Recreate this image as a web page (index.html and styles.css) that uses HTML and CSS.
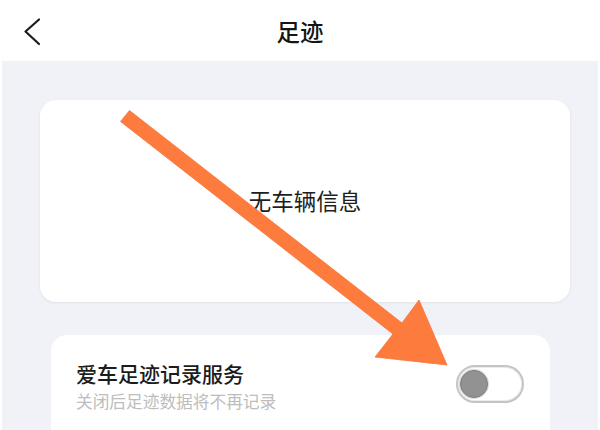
FILE: index.html
```html
<!DOCTYPE html>
<html lang="zh-CN">
<head>
<meta charset="utf-8">
<title>足迹</title>
<link rel="stylesheet" href="styles.css">
</head>
<body>
<div class="page">
  <header class="topbar">
    <div class="back">
      <svg width="16" height="28" viewBox="0 0 16 28" aria-hidden="true">
        <polyline points="15,1.5 1.5,13.5 15,26" fill="none" stroke="#1c1c1c" stroke-width="2.2" stroke-linecap="round" stroke-linejoin="round"/>
      </svg>
    </div>
    <h1 class="title">足迹</h1>
    <div></div>
  </header>
  <main class="content">
    <section class="vehicle-card">无车辆信息</section>
    <section class="service-card">
      <div class="service-text">
        <div class="service-name">爱车足迹记录服务</div>
        <div class="service-desc">关闭后足迹数据将不再记录</div>
      </div>
      <div class="switch"><span class="knob"></span></div>
    </section>
  </main>
  <svg class="arrow" width="600" height="430" viewBox="0 0 600 430" aria-hidden="true">
    <polygon points="129.5,110.5 402,323 419,300 447,365 375,357 393,334 120.5,121.5" fill="#fe7b3e" stroke="#f8743a" stroke-width="0.8" stroke-linejoin="miter"/>
  </svg>
</div>
</body>
</html>
```
FILE: styles.css
```css
* { box-sizing: border-box; }
html, body {
  margin: 0;
  padding: 0;
  height: 430px;
  overflow: hidden;
  background: #ffffff;
  font-family: "Noto Sans CJK SC", "Noto Sans", sans-serif;
}
.page {
  position: relative;
  width: 600px;
  height: 430px;
  overflow: hidden;
  display: flex;
  flex-direction: column;
}
.topbar {
  height: 61px;
  flex: none;
  display: grid;
  grid-template-columns: 1fr auto 1fr;
  align-items: center;
  background: #ffffff;
}
.back {
  padding-left: 24px;
  display: flex;
  align-items: center;
  padding-top: 2px;
}
.back svg { display: block; }
.title {
  margin: 0;
  font-size: 23.5px;
  font-weight: 500;
  color: #151515;
  line-height: 32px;
}
.content {
  flex: 1;
  margin: 0 2px;
  background: #f1f2f7;
  padding-top: 39px;
  display: flex;
  flex-direction: column;
  gap: 33px;
}
.vehicle-card {
  margin-left: 38px;
  width: 530px;
  height: 202px;
  flex: none;
  background: #ffffff;
  border-radius: 16px;
  box-shadow: 0 1px 3px rgba(0, 0, 0, 0.07);
  display: flex;
  align-items: center;
  justify-content: center;
  font-size: 22.5px;
  color: #1e1e1e;
  padding-bottom: 2px;
}
.service-card {
  margin-left: 49px;
  width: 499px;
  height: 130px;
  flex: none;
  background: #ffffff;
  border-radius: 16px;
  padding: 24px 26px 0 25px;
  display: flex;
  align-items: flex-start;
  justify-content: space-between;
}
.service-text {
  display: flex;
  flex-direction: column;
  gap: 3px;
}
.service-name {
  font-size: 21px;
  line-height: 28px;
  font-weight: 500;
  color: #1c1c1c;
}
.service-desc {
  font-size: 16.7px;
  line-height: 22px;
  color: #bdbdbd;
}
.switch {
  margin-top: 6px;
  width: 68px;
  height: 38px;
  border: 2px solid #c4c4c4;
  border-radius: 19px;
  background: #ffffff;
  box-shadow: inset 0 0 0 1px #ececec;
  display: flex;
  align-items: center;
  padding-left: 2px;
}
.knob {
  width: 28px;
  height: 28px;
  border-radius: 50%;
  background: #929292;
  border: 1px solid #7f7f7f;
  box-shadow: 0 0 0 1px #d8d8d8;
}
.arrow {
  position: absolute;
  left: 0;
  top: 0;
  pointer-events: none;
}
```
